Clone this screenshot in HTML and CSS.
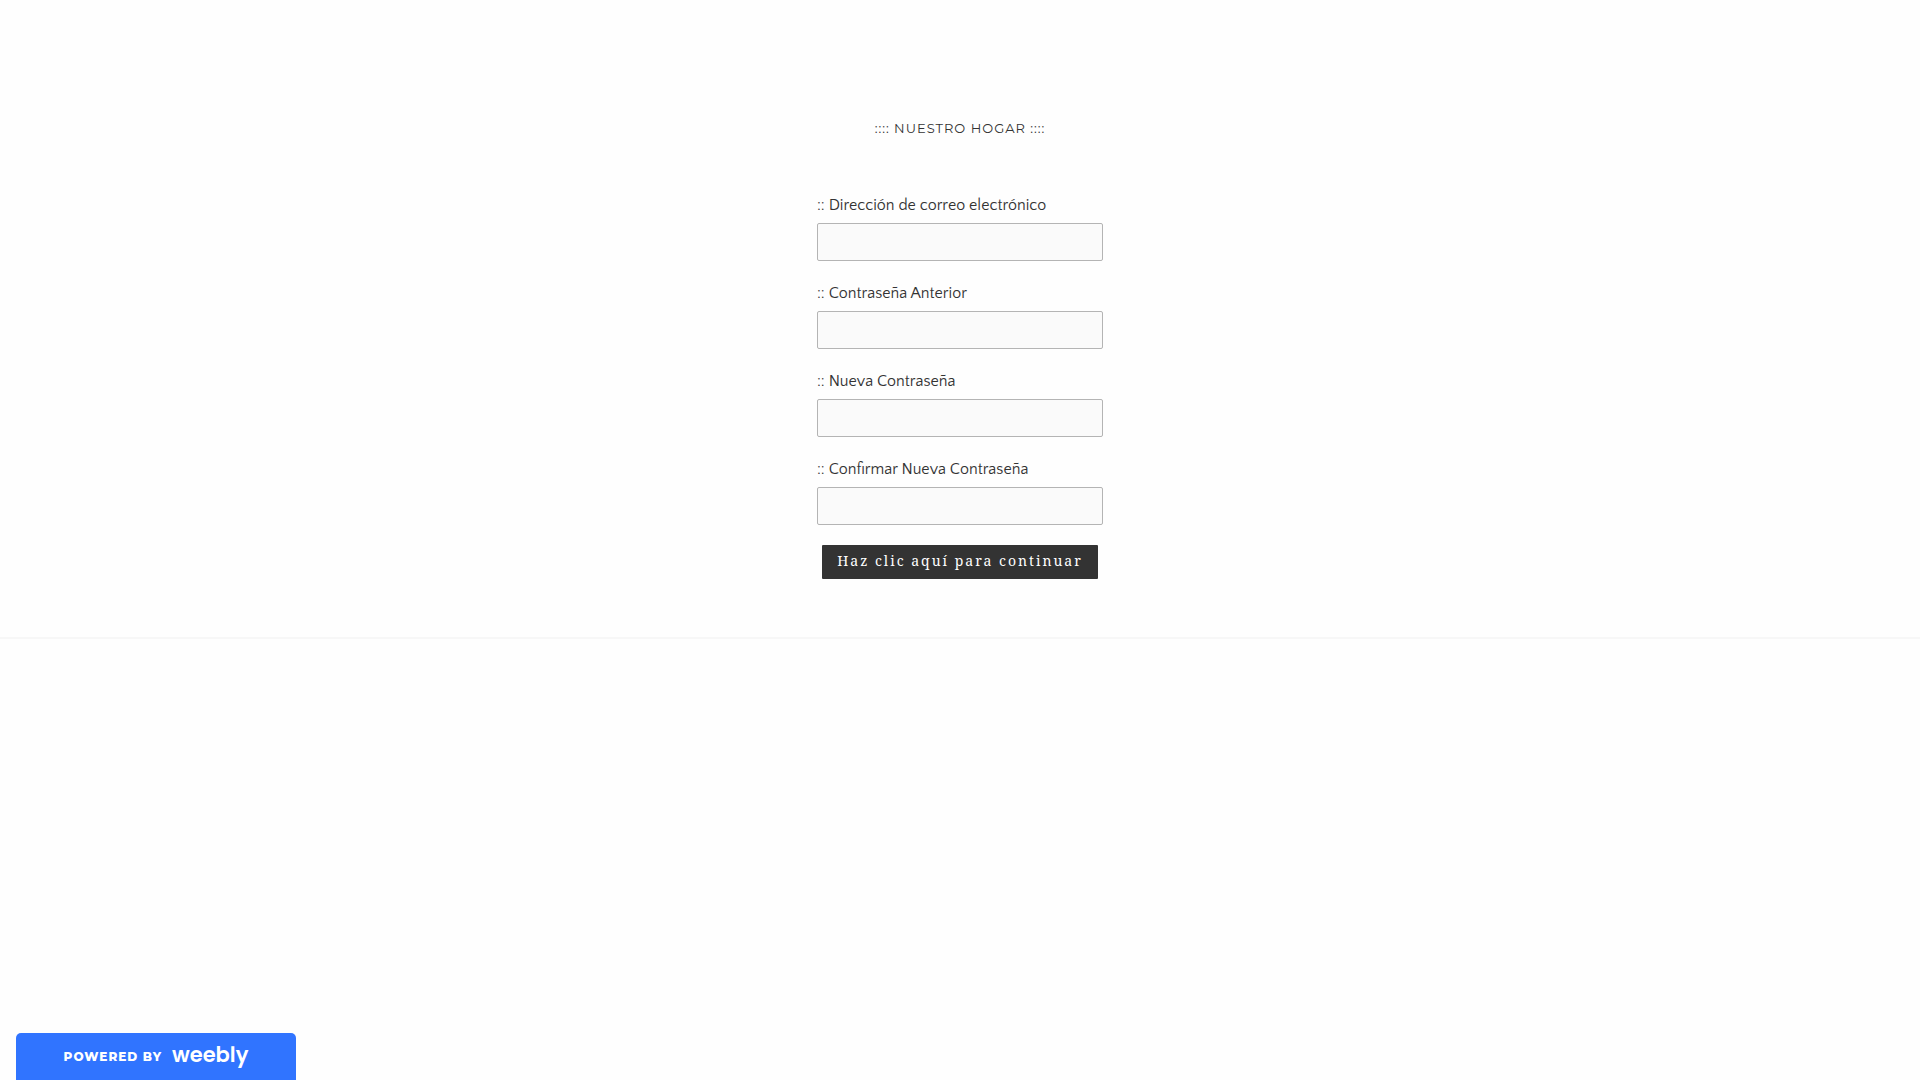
FILE: index.html
```html
<!DOCTYPE html>
<html lang="es">
<head>
<meta charset="UTF-8">
<meta name="viewport" content="width=device-width, initial-scale=1.0">
<title>Nuestro Hogar</title>
<link rel="stylesheet" href="styles.css">
</head>
<body>

<main class="main-wrap">
    <h1 class="title">:::: Nuestro Hogar ::::</h1>

    <form class="password-form">
        <label for="email">:: Dirección de correo electrónico</label>
        <input type="text" id="email" name="email">

        <label for="old-password">:: Contraseña Anterior</label>
        <input type="password" id="old-password" name="old-password">

        <label for="new-password">:: Nueva Contraseña</label>
        <input type="password" id="new-password" name="new-password">

        <label for="confirm-password">:: Confirmar Nueva Contraseña</label>
        <input type="password" id="confirm-password" name="confirm-password">

        <button type="submit">Haz clic aquí para continuar</button>
    </form>
</main>

<a class="weebly-badge" href="#">
    <span class="powered">Powered by</span>
    <span class="weebly">weebly</span>
</a>

</body>
</html>
```
FILE: styles.css
```css
body {
    margin: 0;
    background: #fefefe;
    color: #333;
    font-family: "Quattrocento Sans", Lato, sans-serif;
    font-size: 16px;
    line-height: 24px;
}

.main-wrap {
    padding: 116px 20px 58px;
    border-bottom: 2px solid #f7f7f7;
}

.title {
    margin: 0 0 53px;
    font-family: Montserrat, Inter, sans-serif;
    font-size: 13px;
    font-weight: 400;
    letter-spacing: 1px;
    text-align: center;
    text-transform: uppercase;
}

.password-form {
    display: flex;
    flex-direction: column;
    max-width: 286px;
    margin: 0 auto;
}

.password-form label {
    margin-bottom: 6px;
}

.password-form input {
    box-sizing: border-box;
    width: 100%;
    height: 38px;
    margin: 0 0 20px;
    padding: 8px;
    border: 1px solid #b4b4b4;
    border-radius: 2px;
    background: #fafafa;
    font: inherit;
}

.password-form button {
    align-self: center;
    padding: 4px 15px 6px;
    border: 0;
    border-radius: 1px;
    background: #333;
    color: #fff;
    font-family: "Droid Serif", "Noto Serif", "DejaVu Serif", serif;
    font-size: 14px;
    line-height: 24px;
    letter-spacing: 2px;
    white-space: nowrap;
    cursor: pointer;
}

/* footer badge, always at the bottom of the window */
.weebly-badge {
    position: fixed;
    bottom: 0;
    left: 16px;
    display: flex;
    align-items: center;
    justify-content: center;
    gap: 10px;
    box-sizing: border-box;
    width: 280px;
    height: 47px;
    border-radius: 5px 5px 0 0;
    background: #3074ff;
    color: #fff;
    text-decoration: none;
}

.powered {
    font-family: Montserrat, Inter, sans-serif;
    font-size: 12px;
    font-weight: 800;
    letter-spacing: 1px;
    text-transform: uppercase;
}

.weebly {
    padding-bottom: 4px;
    font-family: Poppins, Lato, sans-serif;
    font-size: 21px;
    font-weight: 600;
}
```
